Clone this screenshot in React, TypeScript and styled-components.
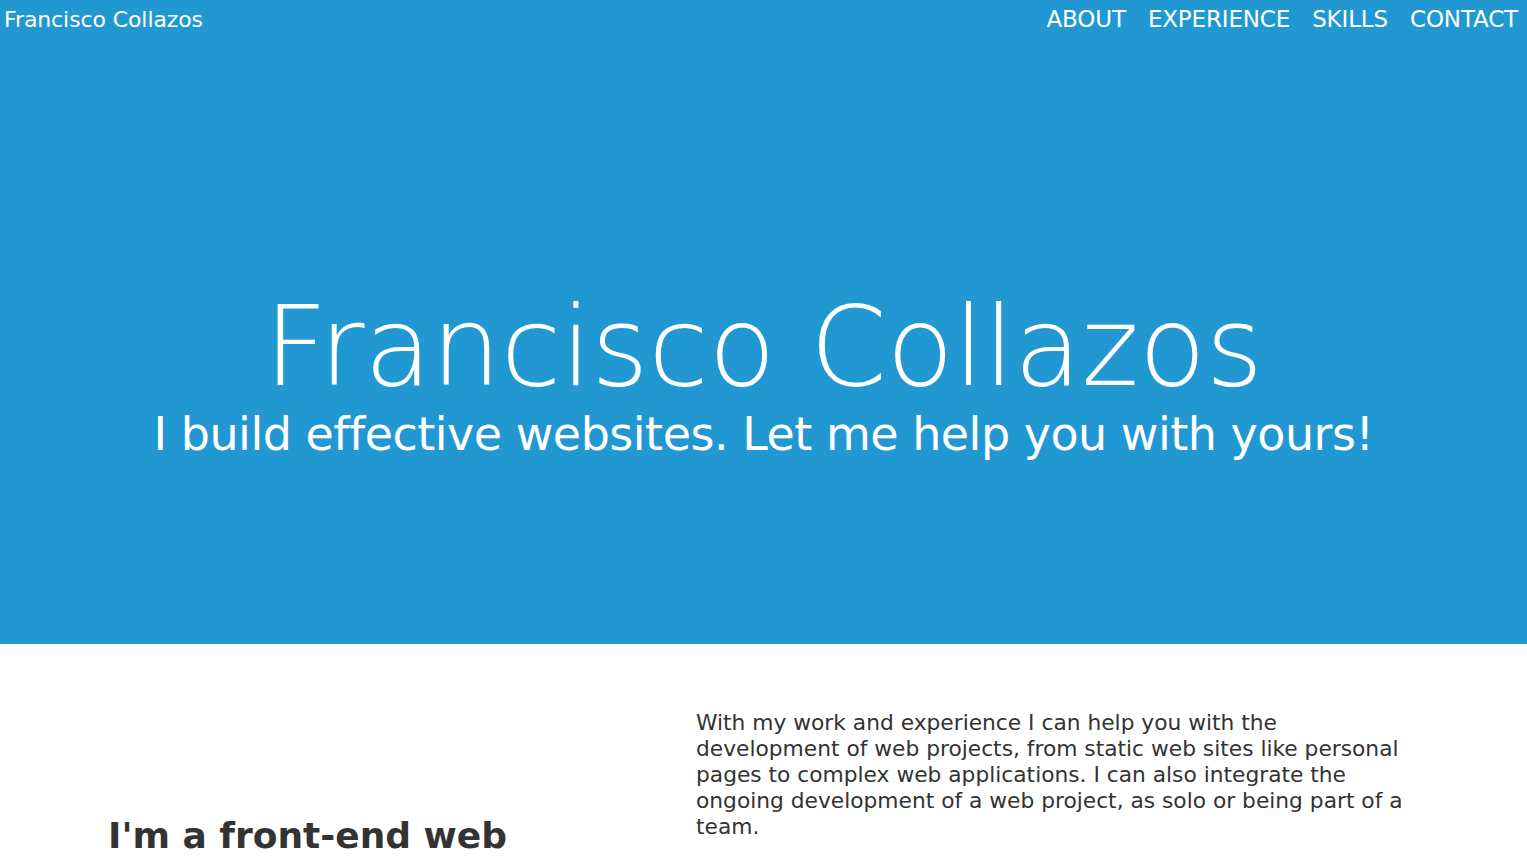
import React from "react";
import styled, { createGlobalStyle } from "styled-components";

const Global = createGlobalStyle`
  html, body { margin: 0; padding: 0; }
  body { font-family: "DejaVu Sans", sans-serif; color: #333; background: #fff; overflow: hidden; }
  * { box-sizing: border-box; }
`;

const Header = styled.header`
  background: #2198d2;
  height: 644px;
  display: flex;
  flex-direction: column;
  color: #fff;
`;

const Nav = styled.nav`
  display: flex;
  justify-content: space-between;
  align-items: center;
  height: 40px;
  padding: 0 9px 2px 4px;
`;

const Brand = styled.a`
  font-size: 22px;
  letter-spacing: -0.1px;
  color: #fff;
  text-decoration: none;
`;

const Links = styled.ul`
  display: flex;
  gap: 22px;
  list-style: none;
  margin: 0;
  padding: 0;
`;

const LinkItem = styled.li`
  font-size: 23px;
  letter-spacing: -0.15px;
  text-transform: uppercase;
`;

const Hero = styled.div`
  display: flex;
  flex-direction: column;
  align-items: center;
  padding-top: 252px;
`;

const Title = styled.h1`
  font-size: 110px;
  font-weight: 300;
  letter-spacing: -0.3px;
  margin: 0;
  line-height: 1;
`;

const Subtitle = styled.p`
  font-size: 46px;
  letter-spacing: -0.5px;
  margin: 5px 0 0;
  line-height: 1.2;
`;

const About = styled.section`
  display: grid;
  grid-template-columns: 588px 710px;
  padding: 66px 0 0 108px;
`;

const Heading = styled.h2`
  font-size: 36px;
  font-weight: bold;
  margin: 104px 0 0;
  line-height: 1.2;
`;

const Body = styled.div`
  font-size: 21.75px;
  line-height: 26px;
  p { margin: 0 0 17px; }
`;

export default function App() {
  return (
    <>
      <Global />
      <Header>
        <Nav>
          <Brand href="#">Francisco Collazos</Brand>
          <Links>
            <LinkItem>About</LinkItem>
            <LinkItem>Experience</LinkItem>
            <LinkItem>Skills</LinkItem>
            <LinkItem>Contact</LinkItem>
          </Links>
        </Nav>
        <Hero>
          <Title>Francisco Collazos</Title>
          <Subtitle>I build effective websites. Let me help you with yours!</Subtitle>
        </Hero>
      </Header>
      <About>
        <div>
          <Heading>I'm a front-end web developer</Heading>
        </div>
        <Body>
          <p>
            With my work and experience I can help you with the development of web projects, from static web sites like personal pages to complex web applications. I can also integrate the ongoing development of a web project, as solo or being part of a team.
          </p>
          <p>
            I have worked with different skills and tools to help me build better and faster web sites.
          </p>
        </Body>
      </About>
    </>
  );
}
